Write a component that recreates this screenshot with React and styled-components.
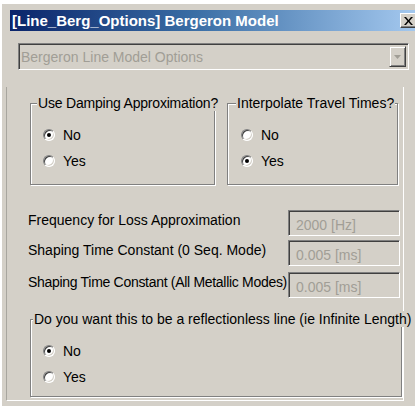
import React from 'react'
import styled, { createGlobalStyle } from 'styled-components'

const GlobalStyle = createGlobalStyle`
  body {
    margin: 0;
    background: #fff;
    overflow: hidden;
    font-family: "Liberation Sans", Arial, sans-serif;
    font-size: 14px;
    color: #000;
  }
`

const Window = styled.div`
  margin: 4px 0 0 2px;
  width: 418px;
  height: 420px;
  box-sizing: border-box;
  padding: 6px 0 0 4px;
  background: #d4d0c8;
`

const TitleBar = styled.div`
  display: flex;
  align-items: center;
  justify-content: space-between;
  height: 21px;
  margin: 0 0 0 4px;
  padding: 0 0 0 2px;
  background: linear-gradient(to right, #0a246a 0%, #3a6ea5 45%, #a6caf0 100%);
  color: #fff;
  font-weight: bold;
  font-size: 15px;
  white-space: nowrap;
`

const CloseButton = styled.div`
  display: flex;
  align-items: center;
  justify-content: center;
  width: 17px;
  height: 15px;
  margin-right: 3px;
  box-sizing: border-box;
  background: #d4d0c8;
  border: 1px solid;
  border-color: #fff #404040 #404040 #fff;
  box-shadow: inset -1px -1px 0 #808080;
`

const Combo = styled.div`
  display: flex;
  align-items: center;
  justify-content: space-between;
  width: 391px;
  height: 27px;
  margin: 12px 0 0 12px;
  box-sizing: border-box;
  border: 1px solid;
  border-color: #808080 #fff #fff #808080;
  box-shadow: inset 1px 1px 0 #404040, inset -1px -1px 0 #d4d0c8;
  padding: 0 2px 0 2px;
  color: #a19e96;
`

const DropButton = styled.div`
  display: flex;
  align-items: center;
  justify-content: center;
  width: 17px;
  height: 21px;
  box-sizing: border-box;
  border: 1px solid;
  border-color: #d4d0c8 #404040 #404040 #d4d0c8;
  box-shadow: inset 1px 1px 0 #fff, inset -1px -1px 0 #808080;
`

const Panel = styled.div`
  width: 398px;
  height: 314px;
  margin-top: 17px;
  box-sizing: border-box;
  border-left: 1px solid #a8a69f;
  border-right: 1px solid #fff;
  border-bottom: 1px solid #fff;
  padding: 16px 0 0 23px;
`

const GroupRow = styled.div`
  display: flex;
  gap: 12px;
`

const Group = styled.div`
  width: ${p => p.$w}px;
  height: ${p => p.$h}px;
  box-sizing: border-box;
  border: 1px solid #808080;
  box-shadow: 1px 1px 0 #fff, inset 1px 1px 0 #fff;
`

const Caption = styled.div`
  width: max-content;
  margin: -9px 0 0 ${p => p.$indent}px;
  padding: 0 1px;
  line-height: 16px;
  white-space: nowrap;
  background: #d4d0c8;
  letter-spacing: ${p => p.$spacing || 0}px;
`

const Options = styled.div`
  display: flex;
  flex-direction: column;
  margin-top: 11px;
  padding-left: ${p => p.$pad || 12}px;
`

const OptionRow = styled.label`
  display: flex;
  align-items: center;
  gap: 8px;
  height: 26px;
`

const RadioDot = styled.span`
  position: relative;
  width: 12px;
  height: 12px;
  box-sizing: border-box;
  border-radius: 50%;
  border: 1px solid;
  border-color: #808080 #fff #fff #808080;
  box-shadow: inset 1px 1px 0 #404040, inset -1px -1px 0 #d4d0c8;
  background: #fff;

  &::after {
    content: '';
    display: ${p => (p.$on ? 'block' : 'none')};
    position: absolute;
    left: 3px;
    top: 3px;
    width: 4px;
    height: 4px;
    border-radius: 50%;
    background: #000;
  }
`

const Fields = styled.div`
  display: grid;
  grid-template-columns: 260px 112px;
  row-gap: 4px;
  margin: 25px 0 0 -2px;
`

const FieldLabel = styled.div`
  position: relative;
  z-index: 1;
  padding-top: 2px;
  line-height: 16px;
  white-space: nowrap;
  margin-top: ${p => p.$top || 0}px;
  letter-spacing: ${p => p.$spacing || 0}px;
`

const FieldBox = styled.div`
  display: flex;
  align-items: center;
  height: 26px;
  margin-top: ${p => p.$top || 0}px;
  box-sizing: border-box;
  padding: 3px 0 0 7px;
  border: 1px solid;
  border-color: #808080 #fff #fff #808080;
  box-shadow: inset 1px 1px 0 #404040, inset -1px -1px 0 #d4d0c8;
  color: #a19e96;
  background: #d4d0c8;
`

const Spacer = styled.div`
  height: 21px;
`

function Radio({ label, on }) {
  return (
    <OptionRow>
      <RadioDot $on={on} />
      {label}
    </OptionRow>
  )
}

function YesNo({ value, pad }) {
  return (
    <Options $pad={pad}>
      <Radio label="No" on={value === 'no'} />
      <Radio label="Yes" on={value === 'yes'} />
    </Options>
  )
}

const fields = [
  { label: 'Frequency for Loss Approximation', value: '2000 [Hz]' },
  { label: 'Shaping Time Constant (0 Seq. Mode)', value: '0.005 [ms]' },
  { label: 'Shaping Time Constant (All Metallic Modes)', value: '0.005 [ms]', top: 2, spacing: -0.3 },
]

export default function App() {
  return (
    <>
      <GlobalStyle />
      <Window>
        <TitleBar>
          <span>[Line_Berg_Options] Bergeron Model</span>
          <CloseButton>
            <svg width="9" height="8" viewBox="0 0 9 8">
              <path d="M0 0h2l2.5 3 2.5-3h2L5.5 4 9 8H7L4.5 5 2 8H0l3.5-4z" fill="#000" />
            </svg>
          </CloseButton>
        </TitleBar>

        <Combo>
          <span>Bergeron Line Model Options</span>
          <DropButton>
            <svg width="7" height="4" viewBox="0 0 7 4">
              <path d="M0 0h7L3.5 4z" fill="#a19e96" />
            </svg>
          </DropButton>
        </Combo>

        <Panel>
          <GroupRow>
            <Group $w={185} $h={82}>
              <Caption $indent={6} $spacing={-0.2}>Use Damping Approximation?</Caption>
              <YesNo value="no" pad={12} />
            </Group>
            <Group $w={171} $h={82}>
              <Caption $indent={8}>Interpolate Travel Times?</Caption>
              <YesNo value="yes" pad={13} />
            </Group>
          </GroupRow>

          <Fields>
            {fields.map(f => (
              <React.Fragment key={f.label}>
                <FieldLabel $top={f.top} $spacing={f.spacing}>{f.label}</FieldLabel>
                <FieldBox $top={f.top}>{f.value}</FieldBox>
              </React.Fragment>
            ))}
          </Fields>

          <Spacer />
          <Group $w={372} $h={78}>
            <Caption $indent={2}>Do you want this to be a reflectionless line (ie Infinite Length)</Caption>
            <YesNo value="no" pad={12} />
          </Group>
        </Panel>
      </Window>
    </>
  )
}
